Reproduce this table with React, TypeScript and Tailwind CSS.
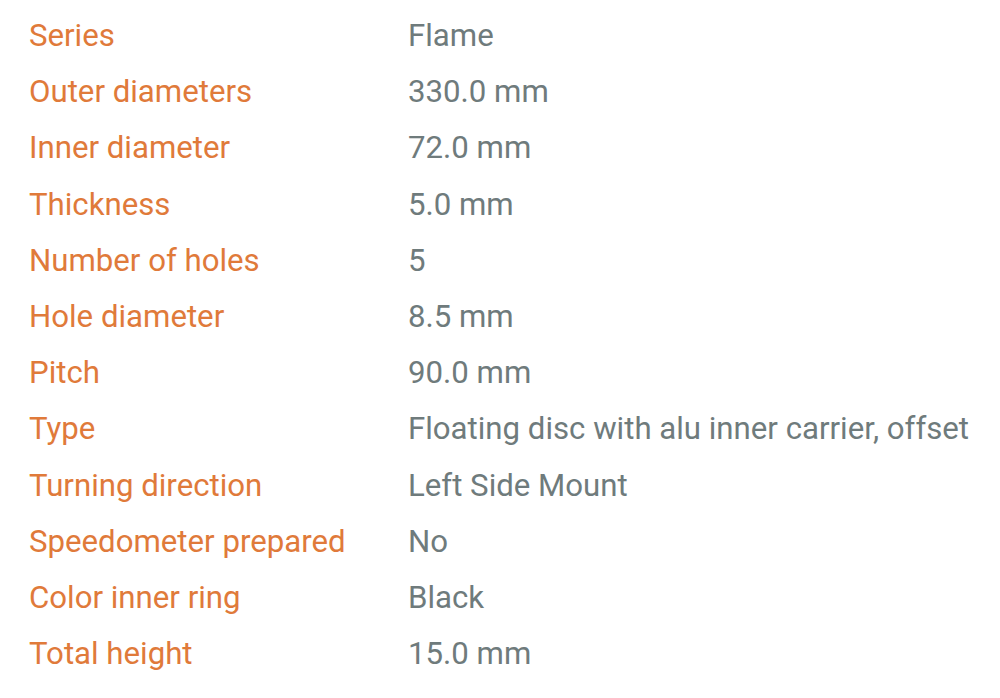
const rows: [string, string][] = [
  ['Series', 'Flame'],
  ['Outer diameters', '330.0 mm'],
  ['Inner diameter', '72.0 mm'],
  ['Thickness', '5.0 mm'],
  ['Number of holes', '5'],
  ['Hole diameter', '8.5 mm'],
  ['Pitch', '90.0 mm'],
  ['Type', 'Floating disc with alu inner carrier, offset'],
  ['Turning direction', 'Left Side Mount'],
  ['Speedometer prepared', 'No'],
  ['Color inner ring', 'Black'],
  ['Total height', '15.0 mm'],
]

export default function App() {
  return (
    <div className="w-[1000px] h-[698px] bg-white pt-[8px] pl-[29px] font-['Roboto',sans-serif] text-[31.2px] leading-[56.2px]">
      {rows.map(([label, value]) => (
        <div key={label} className="flex">
          <div className="w-[379px] shrink-0 text-[#e07a3a]">{label}</div>
          <div className="text-[#6f7b7c] whitespace-nowrap">{value}</div>
        </div>
      ))}
    </div>
  )
}
